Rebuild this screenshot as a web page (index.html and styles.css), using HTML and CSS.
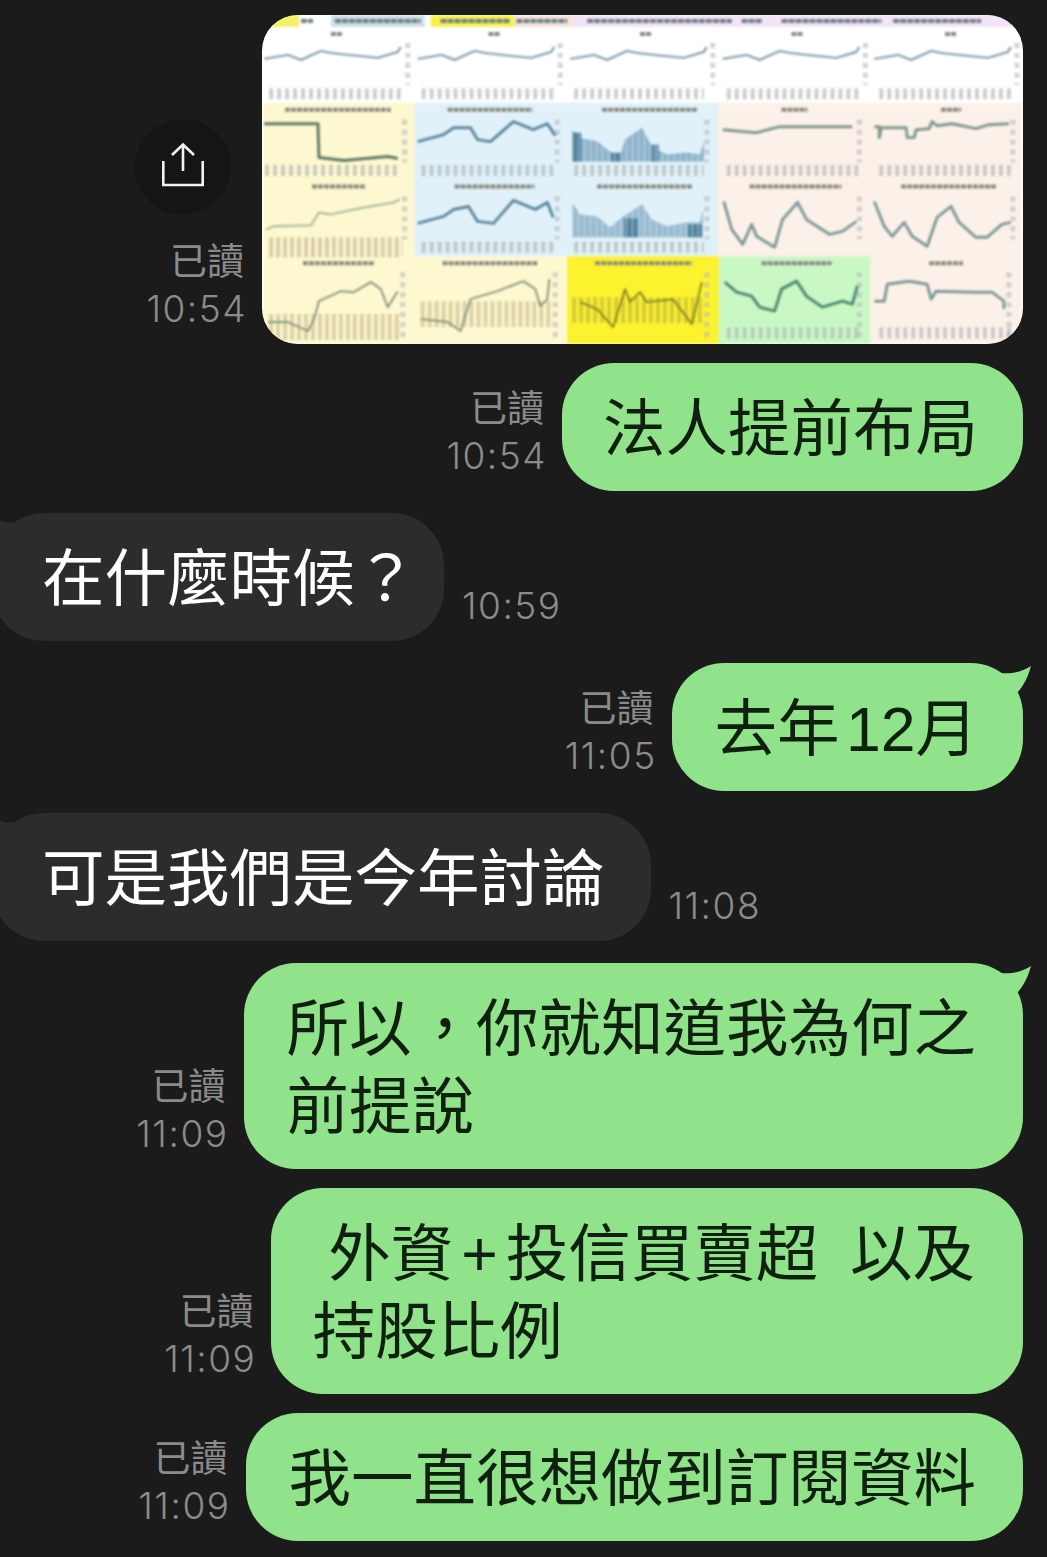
FILE: index.html
```html
<!DOCTYPE html>
<html lang="zh-Hant">
  <head>
    <meta charset="utf-8">
    <title>聊天</title>
    <link rel="stylesheet" href="styles.css">
  </head>
  <body>
    <div class="chat">

      <div class="row row-out">
        <div class="side">
          <div class="share">
            <svg width="44" height="48" viewBox="0 0 44 48" fill="none" stroke="#f2f2f2" stroke-width="2.6">
              <path d="M22 28V2M11 12L22 1.5L33 12"/>
              <path d="M2.3 18V42H41.7V18"/>
            </svg>
          </div>
          <div class="meta"><div>已讀</div><div class="time">10:54</div></div>
        </div>
        <div class="photo">
          <svg class="charts" width="761" height="329" viewBox="0 0 761 330" fill="none">
            <rect width="761" height="330" fill="#fff"/>
            <!-- cell backgrounds -->
            <rect x="0" y="88" width="152" height="154" fill="#fdf8cf"/>
            <rect x="0" y="242" width="305" height="88" fill="#fdf8cf"/>
            <rect x="152" y="88" width="305" height="154" fill="#e0f1f9"/>
            <rect x="456" y="88" width="305" height="242" fill="#fcf1e8"/>
            <rect x="305" y="242" width="152" height="88" fill="#fdf22e"/>
            <rect x="457" y="242" width="152" height="88" fill="#c9f8c5"/>
            <!-- header strip -->
            <rect x="4" y="0" width="32" height="12" fill="#f3f06a"/>
            <rect x="68" y="0" width="94" height="12" fill="#cfe0ea"/>
            <rect x="168" y="0" width="84" height="12" fill="#f7f24e"/>
            <rect x="252" y="0" width="60" height="12" fill="#f8e4dc"/>
            <rect x="312" y="0" width="449" height="12" fill="#f3e4f6"/>
            <g stroke="#6f7f85" stroke-width="4" stroke-dasharray="6 1">
              <path d="M38 6H50M72 6H158M178 6H248M254 6H305M325 6H470M480 6H500M520 6H620M632 6H720"/>
            </g>
            <!-- chart titles -->
            <g stroke="#8a8a80" stroke-width="4" stroke-dasharray="5 1">
              <path d="M68 19H80M226 19H238M378 19H390M530 19H542M684 19H696"/>
              <path d="M22 95H128M185 95H270M340 95H435M520 95H546M680 95H700"/>
              <path d="M49 172H102M192 172H272M335 172H430M488 172H580M640 172H735"/>
              <path d="M40 249H112M180 249H275M333 249H430M500 249H570M668 249H702"/>
            </g>
            <!-- axis labels under the charts -->
            <g stroke="#a9b0b4" stroke-width="11" stroke-dasharray="4 4" opacity=".6">
              <path d="M6 79H138M159 79H292M312 79H442M465 79H597M618 79H750"/>
              <path d="M2 156H138M159 156H292M312 156H442M465 156H597M618 156H750"/>
              <path d="M159 233H292M312 233H442"/>
              <path d="M465 319H597M618 319H750"/>
            </g>
            <g stroke="#c7bd9a" stroke-width="20" stroke-dasharray="4 3" opacity=".7">
              <path d="M6 233H140"/>
            </g>
            <g stroke="#c4b98a" stroke-width="26" stroke-dasharray="4 3" opacity=".6">
              <path d="M6 313H136M158 300H290"/>
            </g>
            <!-- scale labels at the right side of a chart -->
            <g stroke="#b4b8ba" stroke-width="5" stroke-dasharray="5 5" opacity=".6">
              <path d="M145 28V70M298 28V70M451 28V70M604 28V70M756 28V70"/>
              <path d="M142 105V148M295 105V148M445 105V148M598 105V148M752 105V148"/>
              <path d="M142 182V225M295 182V225M445 182V225M598 182V225M752 182V225"/>
              <path d="M140 258V325M293 258V325M445 258V325M598 258V325M748 258V325"/>
            </g>
            <!-- bars -->
            <polygon points="310,115 318,123 335,127 348,137 358,142 363,125 380,113 390,132 405,140 425,138 438,140 442,128 442,147 310,147" fill="#8fb4ca"/>
            <polygon points="310,188 318,200 335,202 348,213 361,202 380,190 390,205 405,212 425,208 438,208 441,195 441,223 310,223" fill="#9abcd0"/>
            <rect x="310" y="118" width="9" height="29" fill="#55849f"/>
            <rect x="349" y="138" width="10" height="9" fill="#55849f"/>
            <rect x="389" y="130" width="8" height="17" fill="#6492ad"/>
            <rect x="362" y="204" width="14" height="19" fill="#55849f"/>
            <rect x="426" y="210" width="14" height="13" fill="#55849f"/>
            <g stroke="#e0f1f9" stroke-width="36" stroke-dasharray="1 5" opacity=".55">
              <path d="M310 130H442"/>
              <path d="M310 205H442"/>
            </g>
            <g stroke="#d4cc3a" stroke-width="26" stroke-dasharray="4 3">
              <path d="M310 296H440"/>
            </g>
            <!-- top row, same line in each cell -->
            <g stroke="#8ea6b2" stroke-width="2.4">
              <polyline id="topline" points="1,44 25,40 38,45 58,36 68,38 85,40 115,43 135,37 138,32"/>
              <use href="#topline" x="154"/>
              <use href="#topline" x="307"/>
              <use href="#topline" x="460"/>
              <use href="#topline" x="612"/>
            </g>
            <g stroke="#668a86" stroke-width="3" stroke-linejoin="round">
              <polyline stroke="#5f7a66" points="1,109 55,109 56,143 81,146 125,142 135,144"/>
              <polyline stroke="#5f8aa0" points="155,127 181,120 191,113 208,113 215,125 228,127 251,107 271,115 285,109 293,121"/>
              <polyline stroke="#7f9a90" points="461,115 495,118 518,112 591,112"/>
              <polyline stroke="#7f9a90" points="613,112 618,112 618,123 620,113 645,113 646,123 653,123 655,115 668,114 671,107 676,111 691,109 715,114 728,110 748,109"/>
              <polyline stroke="#a5b8a0" stroke-width="2" points="3,215 11,212 48,211 56,198 68,200 101,193 131,188 137,185"/>
              <polyline stroke="#5f8aa0" points="155,209 181,202 191,195 206,192 215,207 231,209 251,186 273,195 285,188 291,203"/>
              <polyline stroke="#7f9a9a" points="462,187 470,215 481,230 490,210 495,222 513,233 521,205 536,188 545,205 568,220 581,217 595,207"/>
              <polyline stroke="#7f9a9a" points="613,187 623,212 631,222 643,208 651,222 666,232 676,203 690,192 698,208 715,223 726,223 741,210 750,208"/>
              <polyline stroke="#8a9a80" stroke-width="2" points="5,308 25,308 45,317 51,305 56,287 78,277 91,278 108,268 118,275 125,293 135,277"/>
              <polyline stroke="#8a9a80" stroke-width="2" points="158,305 185,308 198,317 208,285 235,277 261,267 273,275 278,292 285,285 287,265"/>
              <polyline stroke="#8a8a20" stroke-width="2" points="318,288 335,295 351,313 363,275 368,288 378,278 385,288 411,285 430,310 440,268"/>
              <polyline stroke="#4f8a70" points="463,268 475,278 490,282 498,293 513,297 520,275 535,267 545,282 561,293 581,287 591,290 596,272"/>
              <polyline stroke="#7f9a9a" points="613,287 623,287 626,270 648,267 666,270 670,285 675,277 715,278 731,278 743,287 743,295"/>
            </g>
          </svg>
        </div>
      </div>

      <div class="row row-out row-close">
        <div class="meta"><div>已讀</div><div class="time">10:54</div></div>
        <div class="bubble bubble-out layout">法人提前布局</div>
      </div>

      <div class="row">
        <div class="bubble bubble-in">
          <svg class="tail tail-in" width="30" height="40" viewBox="0 0 30 40"><path d="M0 3C8 9 18 12 30 8V40H8V22Z"/></svg>
          在什麼時候<span class="question">？</span>
        </div>
        <div class="meta"><div class="time">10:59</div></div>
      </div>

      <div class="row row-out">
        <div class="meta"><div>已讀</div><div class="time">11:05</div></div>
        <div class="bubble bubble-out year">
          <svg class="tail tail-out" width="40" height="36" viewBox="0 0 40 36"><path d="M5 9C15 12 30 10 40 3C37 14 33 22 27 29L5 29Z"/></svg>
          去年 12月
        </div>
      </div>

      <div class="row">
        <div class="bubble bubble-in">
          <svg class="tail tail-in" width="30" height="40" viewBox="0 0 30 40"><path d="M0 3C8 9 18 12 30 8V40H8V22Z"/></svg>
          可是我們是今年討論
        </div>
        <div class="meta"><div class="time">11:08</div></div>
      </div>

      <div class="row row-out">
        <div class="meta"><div>已讀</div><div class="time">11:09</div></div>
        <div class="bubble bubble-out">
          <svg class="tail tail-out" width="40" height="36" viewBox="0 0 40 36"><path d="M5 9C15 12 30 10 40 3C37 14 33 22 27 29L5 29Z"/></svg>
          所以<span class="comma">，</span>你就知道我為何之<br>前提說
        </div>
      </div>

      <div class="row row-out row-close">
        <div class="meta"><div>已讀</div><div class="time">11:09</div></div>
        <div class="bubble bubble-out keep-spaces"> 外資<span class="plus">+</span>投信買賣超  以及<br>持股比例</div>
      </div>

      <div class="row row-out row-close">
        <div class="meta"><div>已讀</div><div class="time">11:09</div></div>
        <div class="bubble bubble-out">我一直很想做到訂閱資料</div>
      </div>

    </div>
  </body>
</html>
```

FILE: styles.css
```css
body {
  margin: 0;
  background-color: #1b1b1b;
  font-family: "Liberation Sans", "Noto Sans CJK TC", sans-serif;
  overflow: hidden;
}

.chat {
  display: flex;
  flex-direction: column;
  padding: 15px 24px 0 0;
}

.row {
  display: flex;
  align-items: flex-end;
  gap: 18px;
  margin-top: 22px;
}

.row:first-child {
  margin-top: 0;
}

.row-out {
  justify-content: flex-end;
}

.row-close {
  margin-top: 19px;
}

/* read mark and time next to a message */
.meta {
  margin-bottom: 12px;
  color: #8b8b8b;
  font-size: 37px;
  line-height: 46px;
  text-align: right;
}

.time {
  margin-right: -3px;
  font-family: Inter, "Liberation Sans", sans-serif;
  font-size: 37px;
  font-weight: 300;
  letter-spacing: 1.5px;
}

.side {
  display: flex;
  flex-direction: column;
  align-items: flex-end;
}

.share {
  display: flex;
  align-items: center;
  justify-content: center;
  width: 96px;
  height: 96px;
  margin: 0 13px 25px 0;
  border-radius: 50%;
  background-color: #151515;
}

.photo {
  width: 761px;
  height: 329px;
  border-radius: 36px;
  overflow: hidden;
  background-color: #fff;
}

.charts {
  display: block;
  filter: blur(1.2px);
}

.bubble {
  position: relative;
  padding: 27px 47px 23px 43px;
  border-radius: 52px;
  font-size: 62.5px;
  line-height: 78px;
  white-space: nowrap;
}

.bubble-out {
  background-color: #90e38a;
  color: #10200f;
}

.bubble-in {
  margin-left: -8px;
  padding-left: 50px;
  padding-right: 46px;
  background-color: #2c2c2c;
  color: #fff;
}

.tail {
  position: absolute;
  top: 0;
}

.tail-out {
  right: -8px;
  fill: #90e38a;
}

.tail-in {
  left: 0;
  fill: #2c2c2c;
}

.question {
  margin-right: -19px;
}

.layout {
  padding-left: 41px;
  padding-right: 45px;
}

.year {
  padding-right: 45px;
  word-spacing: -11px;
}

.keep-spaces {
  padding-left: 41px;
  padding-right: 48px;
  white-space: pre;
  word-spacing: -1.5px;
}

.plus {
  margin: 0 8px;
}

.comma {
  margin-left: 2px;
  font-family: "Noto Sans CJK SC", sans-serif;
  line-height: 0;
}
```
